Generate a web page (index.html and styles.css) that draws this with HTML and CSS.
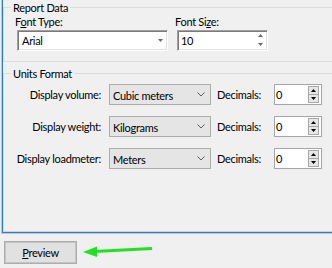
FILE: index.html
```html
<!DOCTYPE html>
<html>
<head>
<meta charset="utf-8">
<link rel="stylesheet" href="styles.css">
</head>
<body>
<div class="frame">
  <div class="panel">
    <fieldset class="group g1">
      <legend>Report Data</legend>
      <div class="font-row">
        <div class="field ftype">
          <div class="lbl">F<u>o</u>nt Type:</div>
          <div class="edit combo-edit">
            <span>Arial</span>
            <svg class="tri" width="5" height="3" viewBox="0 0 5 3"><polygon points="0,0 5,0 2.5,3" fill="#6a6a6a"/></svg>
          </div>
        </div>
        <div class="field fsize">
          <div class="lbl">Font Si<u>z</u>e:</div>
          <div class="edit spin-edit">
            <span>10</span>
            <svg class="spin-arrows" width="5" height="12" viewBox="0 0 5 12"><polygon points="0,3 5,3 2.5,0" fill="#6a6a6a"/><polygon points="0,9 5,9 2.5,12" fill="#6a6a6a"/></svg>
          </div>
        </div>
      </div>
    </fieldset>
    <fieldset class="group g2">
      <legend>Units Format</legend>
      <div class="units">
        <div class="ulbl">Display volume:</div>
        <div class="dd"><span>Cubic meters</span><svg class="chev" width="8" height="5" viewBox="0 0 8 5"><polyline points="0.5,0.5 4,4 7.5,0.5" fill="none" stroke="#606060" stroke-width="1"/></svg></div>
        <div class="dlbl">Decimals:</div>
        <div class="num"><span>0</span><div class="btns"><div class="b up"><svg width="5" height="3" viewBox="0 0 5 3"><polygon points="0,3 5,3 2.5,0" fill="#000"/></svg></div><div class="b dn"><svg width="5" height="3" viewBox="0 0 5 3"><polygon points="0,0 5,0 2.5,3" fill="#000"/></svg></div></div></div>

        <div class="ulbl">Display weight:</div>
        <div class="dd"><span>Kilograms</span><svg class="chev" width="8" height="5" viewBox="0 0 8 5"><polyline points="0.5,0.5 4,4 7.5,0.5" fill="none" stroke="#606060" stroke-width="1"/></svg></div>
        <div class="dlbl">Decimals:</div>
        <div class="num"><span>0</span><div class="btns"><div class="b up"><svg width="5" height="3" viewBox="0 0 5 3"><polygon points="0,3 5,3 2.5,0" fill="#000"/></svg></div><div class="b dn"><svg width="5" height="3" viewBox="0 0 5 3"><polygon points="0,0 5,0 2.5,3" fill="#000"/></svg></div></div></div>

        <div class="ulbl">Display loadmeter:</div>
        <div class="dd"><span>Meters</span><svg class="chev" width="8" height="5" viewBox="0 0 8 5"><polyline points="0.5,0.5 4,4 7.5,0.5" fill="none" stroke="#606060" stroke-width="1"/></svg></div>
        <div class="dlbl">Decimals:</div>
        <div class="num"><span>0</span><div class="btns"><div class="b up"><svg width="5" height="3" viewBox="0 0 5 3"><polygon points="0,3 5,3 2.5,0" fill="#000"/></svg></div><div class="b dn"><svg width="5" height="3" viewBox="0 0 5 3"><polygon points="0,0 5,0 2.5,3" fill="#000"/></svg></div></div></div>
      </div>
    </fieldset>
  </div>
</div>
<div class="footer">
  <button class="btn"><u>P</u>review</button>
  <svg class="arrow" width="70" height="14" viewBox="0 0 70 14">
    <line x1="11" y1="7.5" x2="69" y2="4.5" stroke="#22e022" stroke-width="3"/>
    <polygon points="0,8 14,2.5 14,13" fill="#22e022"/>
  </svg>
</div>
</body>
</html>
```
FILE: styles.css
```css
html, body {
  margin: 0;
  padding: 0;
  width: 332px;
  height: 268px;
  overflow: hidden;
  background: #f0f0f0;
  font-family: Lato, "Liberation Sans", sans-serif;
  font-size: 11px;
  letter-spacing: -0.3px;
  color: #000;
}

.frame {
  margin-left: 1px;
  width: 345px;
  border-left: 1px solid #c4c4c4;
  border-bottom: 1px solid #c4c4c4;
}

.panel {
  height: 232px;
  border-left: 1px solid #2a7fd4;
  border-bottom: 1px solid #2a7fd4;
  display: flex;
  flex-direction: column;
}

.group {
  margin: 0;
  padding: 0;
  border: 1px solid #dcdcdc;
  min-width: 0;
}

.group legend {
  margin-left: 7px;
  padding: 0 2px;
  line-height: 15px;
  font-size: 11px;
}

.g1 {
  padding-bottom: 10px;
}

.font-row {
  display: flex;
  padding-left: 11px;
}

.lbl {
  line-height: 13px;
  height: 13px;
  margin-bottom: 2px;
}

.ftype {
  width: 160px;
}

.edit {
  box-sizing: border-box;
  height: 21px;
  margin-left: 2px;
  background: #fff;
  border-top: 1px solid #a0a0a0;
  border-left: 1px solid #a0a0a0;
  border-right: 1px solid #fff;
  border-bottom: 1px solid #fff;
  box-shadow: inset 1px 1px 0 #7a7a7a, inset -1px -1px 0 #e3e3e3;
  display: flex;
  align-items: center;
  justify-content: space-between;
  padding-left: 4px;
  padding-right: 4px;
}

.combo-edit {
  width: 151px;
}

.spin-edit {
  width: 91px;
  padding-left: 3px;
}

.spin-arrows {
  margin-top: -1px;
}

.g2 {
  margin-top: 4px;
  flex: 1;
  border-bottom-color: #d0d0d0;
}

.units {
  display: grid;
  grid-template-columns: 105px 102px 63px 48px;
  grid-auto-rows: 21px;
  row-gap: 11px;
  padding-top: 3px;
  align-items: center;
}

.ulbl {
  text-align: right;
  padding-right: 8px;
}

.dlbl {
  padding-left: 6px;
}

.dd {
  box-sizing: border-box;
  height: 21px;
  background: #e5e5e5;
  border: 1px solid #adadad;
  display: flex;
  align-items: center;
  justify-content: space-between;
  padding-left: 3px;
  padding-right: 5px;
}

.dd span {
  margin-top: 1px;
}

.num {
  box-sizing: border-box;
  height: 21px;
  background: #fff;
  border: 1px solid #a5a5a5;
  display: flex;
  align-items: center;
  justify-content: space-between;
  padding-left: 1px;
  padding-right: 2px;
}

.btns {
  display: flex;
  flex-direction: column;
}

.b {
  box-sizing: border-box;
  width: 11px;
  height: 9px;
  border: 1px solid #a8a8a8;
  background: #e6e6e6;
  display: flex;
  align-items: center;
  justify-content: center;
}

.b.dn {
  margin-top: -1px;
}

.b svg {
  display: block;
}

.footer {
  display: flex;
  align-items: flex-start;
  padding-left: 4px;
  margin-top: 7px;
}

.btn {
  box-sizing: border-box;
  width: 73px;
  height: 23px;
  margin: 0;
  padding: 0;
  border: 1px solid #adadad;
  box-shadow: inset 0 0 0 1px #c4c4c4;
  background: #e1e1e1;
  font-family: Lato, "Liberation Sans", sans-serif;
  font-size: 11px;
  letter-spacing: -0.3px;
  color: #000;
}

.arrow {
  display: block;
  margin-left: 6px;
  margin-top: 3px;
}
```
